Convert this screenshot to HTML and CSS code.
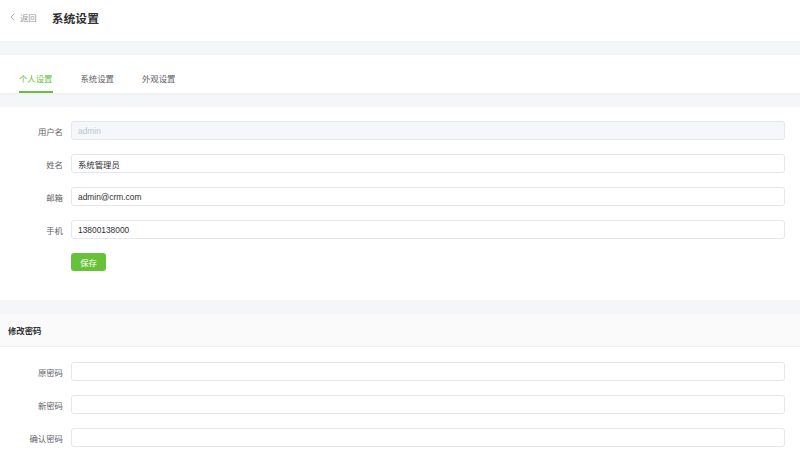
FILE: index.html
```html
<!DOCTYPE html>
<html lang="zh-CN">
<head>
<meta charset="utf-8">
<title>系统设置</title>
<link rel="stylesheet" href="styles.css">
</head>
<body>
<header class="topbar">
  <a class="back">
    <svg class="back-icon" viewBox="0 0 6 10" width="5" height="8"><path d="M5 1 L1.2 5 L5 9" fill="none" stroke="#909399" stroke-width="1"/></svg>
    <span>返回</span>
  </a>
  <h1 class="title">系统设置</h1>
</header>
<div class="gap"></div>
<nav class="tabs">
  <span class="tab active">个人设置</span>
  <span class="tab">系统设置</span>
  <span class="tab">外观设置</span>
</nav>
<div class="gap"></div>
<section class="card">
  <div class="row"><label class="label">用户名</label><input class="input disabled" value="admin" disabled></div>
  <div class="row"><label class="label">姓名</label><input class="input" value="系统管理员"></div>
  <div class="row"><label class="label">邮箱</label><input class="input" value="admin@crm.com"></div>
  <div class="row"><label class="label">手机</label><input class="input" value="13800138000"></div>
  <div class="row"><span class="label"></span><button class="btn">保存</button></div>
</section>
<div class="gap"></div>
<section class="card pw">
  <div class="card-head">修改密码</div>
  <div class="card-body">
    <div class="row"><label class="label">原密码</label><input class="input" type="password"></div>
    <div class="row"><label class="label">新密码</label><input class="input" type="password"></div>
    <div class="row"><label class="label">确认密码</label><input class="input" type="password"></div>
  </div>
</section>
</body>
</html>
```
FILE: styles.css
```css
* { box-sizing: border-box; }
html, body {
  margin: 0;
  padding: 0;
  background: #f5f6f8;
  font-family: "Noto Sans CJK SC", "Noto Sans", sans-serif;
  color: #303133;
}
.topbar {
  height: 41px;
  background: #fff;
  display: flex;
  align-items: center;
  padding: 0 0 7px 10px;
}
.back {
  display: flex;
  align-items: center;
  gap: 5px;
  font-size: 8.4px;
  color: #909399;
}
.title {
  margin: 0 0 0 15px;
  font-size: 11.8px;
  font-weight: 600;
  color: #303133;
}
.gap { height: 14px; }
.tabs {
  height: 38px;
  background: #fff;
  display: flex;
  padding-left: 19px;
  gap: 28px;
  box-shadow: 0 1px 2px rgba(0,0,0,0.04);
}
.tab {
  font-size: 8.4px;
  color: #606266;
  display: flex;
  align-items: center;
  border-bottom: 2px solid transparent;
  padding-top: 9px;
}
.tab.active {
  color: #67c23a;
  border-bottom-color: #67c23a;
}
.card {
  background: #fff;
  padding: 14px 15px 15px 11px;
}
.row {
  display: flex;
  align-items: center;
  margin-bottom: 14px;
}
.label {
  width: 52px;
  margin-right: 8px;
  text-align: right;
  font-size: 8.4px;
  color: #606266;
  flex: none;
}
.input {
  flex: 1;
  height: 19px;
  border: 1px solid #e4e7ed;
  border-radius: 3px;
  padding: 0 6px;
  font-family: "Liberation Sans", "Noto Sans CJK SC", sans-serif;
  font-size: 8.4px;
  color: #303133;
  background: #fff;
  outline: none;
}
.input.disabled {
  background: #f5f7fa;
  color: #c0c4cc;
}
.btn {
  width: 35px;
  height: 18px;
  border: none;
  border-radius: 3px;
  background: #67c23a;
  color: #fff;
  font-family: inherit;
  font-size: 8.4px;
  padding: 0;
}
.card.pw { padding: 0; }
.card-head {
  height: 33px;
  background: #fafafa;
  border-bottom: 1px solid #ebeef5;
  display: flex;
  align-items: center;
  padding-left: 8px;
  font-size: 8.4px;
  font-weight: 600;
  color: #303133;
}
.card-body {
  padding: 15px 15px 15px 11px;
}
```
